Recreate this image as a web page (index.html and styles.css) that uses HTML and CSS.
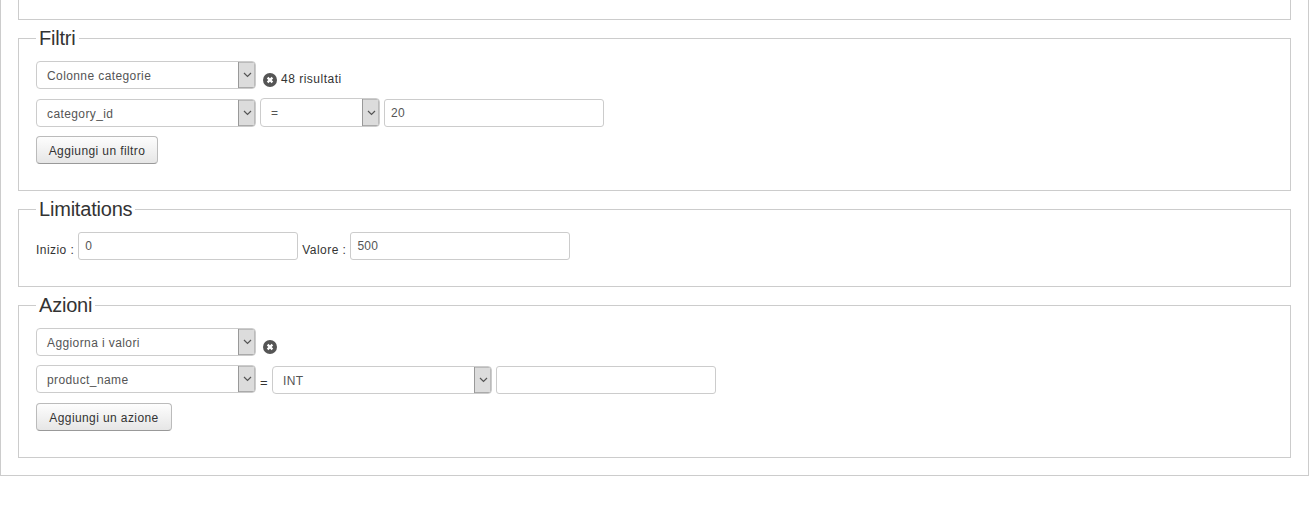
FILE: index.html
```html
<!DOCTYPE html>
<html lang="en">
<head>
  <meta charset="UTF-8" />
  <title>Modifica di massa</title>
  <link rel="stylesheet" href="styles.css">
</head>
<body>
  <div class="wrapper">
    <div class="top-box"></div>

    <fieldset>
      <legend>Filtri</legend>
      <div class="row">
        <div class="select">
          <span class="select-value">Colonne categorie</span>
          <span class="select-arrow"><svg width="9" height="6" viewBox="0 0 9 6"><path d="M1 1l3.5 3.5L8 1" fill="none" stroke="#555" stroke-width="1.2"/></svg></span>
        </div>
        <svg class="remove" width="14" height="14" viewBox="0 0 14 14"><circle cx="7" cy="7" r="7" fill="#555"/><path d="M4.6 4.6l4.8 4.8M9.4 4.6l-4.8 4.8" stroke="#fff" stroke-width="2.2"/></svg>
        <span class="results">48 risultati</span>
      </div>
      <div class="row row-tall">
        <div class="select">
          <span class="select-value">category_id</span>
          <span class="select-arrow"><svg width="9" height="6" viewBox="0 0 9 6"><path d="M1 1l3.5 3.5L8 1" fill="none" stroke="#555" stroke-width="1.2"/></svg></span>
        </div>
        <div class="select select-small">
          <span class="select-value">=</span>
          <span class="select-arrow"><svg width="9" height="6" viewBox="0 0 9 6"><path d="M1 1l3.5 3.5L8 1" fill="none" stroke="#555" stroke-width="1.2"/></svg></span>
        </div>
        <input class="field" type="text" value="20" />
      </div>
      <button class="add-filter" type="button">Aggiungi un filtro</button>
    </fieldset>

    <fieldset>
      <legend>Limitations</legend>
      <div class="row">
        <label class="limit-label" for="start">Inizio :</label>
        <input class="field" type="text" id="start" value="0" />
        <label class="limit-label" for="limit">Valore :</label>
        <input class="field" type="text" id="limit" value="500" />
      </div>
    </fieldset>

    <fieldset>
      <legend>Azioni</legend>
      <div class="row">
        <div class="select">
          <span class="select-value">Aggiorna i valori</span>
          <span class="select-arrow"><svg width="9" height="6" viewBox="0 0 9 6"><path d="M1 1l3.5 3.5L8 1" fill="none" stroke="#555" stroke-width="1.2"/></svg></span>
        </div>
        <svg class="remove" width="14" height="14" viewBox="0 0 14 14"><circle cx="7" cy="7" r="7" fill="#555"/><path d="M4.6 4.6l4.8 4.8M9.4 4.6l-4.8 4.8" stroke="#fff" stroke-width="2.2"/></svg>
      </div>
      <div class="row row-tall">
        <div class="select select-top">
          <span class="select-value">product_name</span>
          <span class="select-arrow"><svg width="9" height="6" viewBox="0 0 9 6"><path d="M1 1l3.5 3.5L8 1" fill="none" stroke="#555" stroke-width="1.2"/></svg></span>
        </div>
        <span class="equals">=</span>
        <div class="select select-type">
          <span class="select-value">INT</span>
          <span class="select-arrow"><svg width="9" height="6" viewBox="0 0 9 6"><path d="M1 1l3.5 3.5L8 1" fill="none" stroke="#555" stroke-width="1.2"/></svg></span>
        </div>
        <input class="field" type="text" />
      </div>
      <button class="add-action" type="button">Aggiungi un azione</button>
    </fieldset>
  </div>
</body>
</html>
```

FILE: styles.css
```css
body {
  margin: 0;
  font-family: "Liberation Sans", Arial, sans-serif;
  font-size: 12px;
  color: #333;
  background: white;
}

.wrapper {
  box-sizing: border-box;
  width: 1309px;
  height: 476px;
  padding: 0 17px;
  border: 1px solid #ccc;
  border-top: none;
}

.top-box {
  box-sizing: border-box;
  height: 20px;
  border: 1px solid #ccc;
  border-top: none;
}

fieldset {
  margin: 6px 0 0;
  padding: 11px 17px 26px;
  border: 1px solid #ccc;
}

legend {
  padding: 0 3px;
  font-size: 20px;
  line-height: 24px;
  letter-spacing: -0.2px;
  color: #333;
}

.row {
  display: flex;
  align-items: flex-end;
  margin-bottom: 9px;
}

.row-tall {
  height: 29px;
}

fieldset > .row:last-child {
  margin-bottom: 0;
}

.select {
  box-sizing: border-box;
  display: flex;
  justify-content: space-between;
  width: 220px;
  height: 28px;
  border: 1px solid #ccc;
  border-radius: 4px;
  background: white;
  overflow: hidden;
}

.select-top {
  align-self: flex-start;
}

.select-small {
  width: 120px;
  height: 29px;
  margin-left: 4px;
}

.select-value {
  padding-left: 10px;
  line-height: 28px;
  letter-spacing: 0.4px;
  color: #555;
}

.select-arrow {
  box-sizing: border-box;
  display: flex;
  align-items: center;
  justify-content: center;
  width: 17px;
  border-left: 1px solid #999;
  background: #dcdcdc;
  box-shadow: inset 0 1px 0 #bbb, inset 0 -1px 0 #aaa, inset -1px 0 0 #bbb;
}

.field {
  box-sizing: border-box;
  width: 220px;
  height: 28px;
  margin: 0 0 0 4px;
  padding: 0 6px;
  border: 1px solid #ccc;
  border-radius: 3px;
  font-family: inherit;
  font-size: 12px;
  letter-spacing: 0.3px;
  color: #555;
}

.remove {
  margin: 0 4px 2px 7px;
}

.results {
  line-height: 20px;
  letter-spacing: 0.5px;
}

.limit-label {
  line-height: 20px;
  letter-spacing: 0.45px;
}

.field + .limit-label {
  margin-left: 4px;
}

.equals {
  width: 12px;
  margin-left: 4px;
  font-size: 13px;
  line-height: 22px;
}

button {
  box-sizing: border-box;
  display: block;
  height: 28px;
  padding: 2px 0 0;
  border: 1px solid #bbb;
  border-bottom-color: #999;
  border-radius: 4px;
  background: linear-gradient(#fdfdfd, #e6e6e6);
  font-family: inherit;
  font-size: 12px;
  letter-spacing: 0.4px;
  color: #333;
}

.add-filter {
  width: 122px;
}

.add-action {
  width: 136px;
}
```
